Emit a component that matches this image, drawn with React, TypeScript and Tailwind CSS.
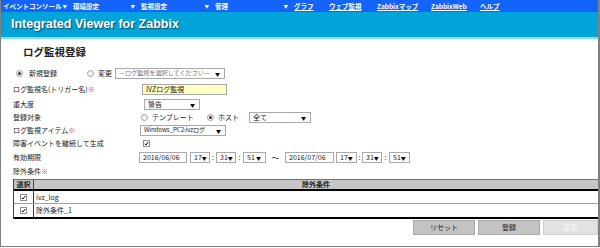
import React from 'react'

const jp = "font-['Noto_Sans_CJK_JP',sans-serif]"

function Arrow() {
  return <span className="text-[5px] leading-none text-black shrink-0">▼</span>
}

function Sel({ w, text, muted, small }: { w: string; text: string; muted?: boolean; small?: boolean }) {
  return (
    <div className={`flex items-center justify-between overflow-hidden border border-[#a9a9a9] bg-white h-[11px] pl-[3px] pr-[4px] ${w}`}>
      <span
        className={`leading-none whitespace-nowrap ${small ? 'text-[6.2px] tracking-[-0.1px]' : 'text-[7px]'} ${
          muted ? 'text-[#777]' : 'text-[#222]'
        }`}
      >
        {text}
      </span>
      <Arrow />
    </div>
  )
}

function Radio({ on }: { on?: boolean }) {
  return (
    <span className="flex items-center justify-center w-[7px] h-[7px] rounded-full border border-[#a0a0a0] bg-[#f4f4f4]">
      {on && <span className="w-[3px] h-[3px] rounded-full bg-[#333]" />}
    </span>
  )
}

function Check() {
  return (
    <span className="flex items-center justify-center w-[7px] h-[7px] border border-[#909090] bg-white">
      <svg width="5" height="5" viewBox="0 0 10 10">
        <path d="M1.5 5.5 L4 8 L8.5 2" stroke="#111" strokeWidth="2" fill="none" />
      </svg>
    </span>
  )
}

function Row({ label, req, h, children }: { label: string; req?: boolean; h: string; children?: React.ReactNode }) {
  return (
    <div className={`flex items-center ${h}`}>
      <div className="w-[138px] pl-[12px] text-[7px] leading-none text-[#222] whitespace-nowrap">
        {label}
        {req && <span className="text-[#ff2a2a]">※</span>}
      </div>
      <div className="flex items-center">{children}</div>
    </div>
  )
}

const menus = [
  { t: 'イベントコンソール', drop: true, w: 'w-[70px]' },
  { t: '環境設定', drop: true, w: 'w-[68px]' },
  { t: '監視設定', drop: true, w: 'w-[74px]' },
  { t: '管理', drop: true, w: 'w-[79px]' },
  { t: 'グラフ', w: 'w-[35px]' },
  { t: 'ウェブ監視', w: 'w-[48px]' },
  { t: 'Zabbixマップ', w: 'w-[54px]' },
  { t: 'ZabbixWeb', w: 'w-[49px]' },
  { t: 'ヘルプ', w: 'w-[40px]' },
]

export default function App() {
  return (
    <div className={`w-[600px] h-[248px] bg-white overflow-hidden ${jp}`}>
      <div className="h-[247px] border-l border-r-2 border-b border-[#808080] flex flex-col">
        {/* nav */}
        <div className="h-[12px] bg-[#1463fa] flex items-center pl-[2px] shrink-0">
          {menus.map((m, i) => (
            <div key={i} className={`flex items-center justify-between pr-[6px] ${m.w}`}>
              <span className={`text-[6.5px] font-bold leading-none text-white whitespace-nowrap ${m.drop ? '' : 'underline'}`}>{m.t}</span>
              {m.drop && <span className="text-[4.5px] text-white leading-none">▼</span>}
            </div>
          ))}
        </div>
        {/* header */}
        <div className="h-[25px] bg-[#00a3da] flex items-center pl-[10px] shrink-0">
          <span className="font-['Liberation_Sans',sans-serif] font-bold text-[12.5px] text-white leading-none [text-shadow:1px_1px_1px_#1d4a5c]">
            Integrated Viewer for Zabbix
          </span>
        </div>
        <div className="h-[2px] bg-[#7fe0ff] shrink-0" />

        {/* title */}
        <div className="h-[27px] flex items-center pl-[22px] shrink-0">
          <span className="text-[10.5px] font-bold leading-none text-[#222]">ログ監視登録</span>
        </div>

        {/* form */}
        <div className="flex items-center h-[15px] pl-[15px] gap-[6px]">
          <Radio on />
          <span className="text-[7px] leading-none text-[#222] w-[52px]">新規登録</span>
          <Radio />
          <span className="text-[7px] leading-none text-[#222] ml-[-2px]">変更</span>
          <Sel w="w-[110px] ml-[-3px]" text="－ログ監視を選択してください－" muted small />
        </div>
        <Row label="ログ監視名(トリガー名)" req h="h-[16px]">
          <div className="ml-[3px] w-[85px] h-[11px] border border-[#a9a9a9] bg-[#ffffc4] flex items-center pl-[3px]">
            <span className="text-[7px] leading-none text-[#222]">IVZログ監視</span>
          </div>
        </Row>
        <Row label="重大度" h="h-[14px]">
          <Sel w="w-[56px] ml-[5px]" text="警告" />
        </Row>
        <Row label="登録対象" h="h-[13px]">
          <div className="ml-[2px] flex items-center gap-[4px]">
            <Radio />
            <span className="text-[7px] leading-none text-[#222] w-[51px]">テンプレート</span>
            <Radio on />
            <span className="text-[7px] leading-none text-[#222] w-[27px]">ホスト</span>
            <Sel w="w-[62px]" text="全て" />
          </div>
        </Row>
        <Row label="ログ監視アイテム" req h="h-[13px]">
          <Sel w="w-[86px] ml-[1px]" text="Windows_PC2:ivzログ" small />
        </Row>
        <Row label="障害イベントを継続して生成" h="h-[13px]">
          <div className="ml-[4px]">
            <Check />
          </div>
        </Row>
        <Row label="有効期限" h="h-[15px]">
          <div className="flex items-center text-[7px] leading-none text-[#222]">
            <div className="w-[48px] h-[11px] border border-[#a9a9a9] flex items-center pl-[3px]">2016/06/06</div>
            <div className="ml-[3px]"><Sel w="w-[20px]" text="17" /></div>
            <span className="w-[6px] text-center">:</span>
            <Sel w="w-[20px]" text="31" />
            <span className="w-[7px] text-center">:</span>
            <Sel w="w-[23px]" text="51" />
            <span className="w-[19px] text-center text-[8px]">～</span>
            <div className="w-[49px] h-[11px] border border-[#a9a9a9] flex items-center pl-[3px]">2016/07/06</div>
            <div className="ml-[2px]"><Sel w="w-[21px]" text="17" /></div>
            <span className="w-[5px] text-center">:</span>
            <Sel w="w-[20px]" text="31" />
            <span className="w-[7px] text-center">:</span>
            <Sel w="w-[21px]" text="51" />
          </div>
        </Row>
        <Row label="除外条件" req h="h-[13px]" />

        {/* table */}
        <div className="ml-[12px] mt-[1px] border-l border-[#404040] text-[7px] leading-none text-[#222]">
          <div className="flex h-[10px] bg-[#c6c6c6] border-t border-[#707070]">
            <div className="w-[20px] border-r border-[#404040] flex items-center justify-center font-bold">選択</div>
            <div className="flex-1 flex items-center justify-center font-bold">除外条件</div>
          </div>
          <div className="h-[2px] bg-black" />
          {['ivz_log', '除外条件_1'].map((r, i) => (
            <div key={i} className={`flex h-[13px] ${i === 0 ? 'border-b border-[#a0a0a0]' : ''}`}>
              <div className="w-[20px] border-r border-[#404040] flex items-center justify-center">
                <Check />
              </div>
              <div className="flex-1 flex items-center pl-[2px]">{r}</div>
            </div>
          ))}
          <div className="h-[2px] bg-black" />
        </div>

        {/* buttons */}
        <div className="flex justify-end gap-[3px] mt-[1px] text-[7px] leading-none">
          <div className="w-[62px] h-[15px] bg-[#c3c3c3] border border-[#a8a8a8] flex items-center justify-center text-[#222]">リセット</div>
          <div className="w-[62px] h-[15px] bg-[#c3c3c3] border border-[#a8a8a8] flex items-center justify-center text-[#222]">登録</div>
          <div className="w-[55px] h-[15px] bg-[#e2e2e2] border border-[#d0d0d0] flex items-center justify-center text-[#f8f8f8]">変更</div>
        </div>
      </div>
    </div>
  )
}
